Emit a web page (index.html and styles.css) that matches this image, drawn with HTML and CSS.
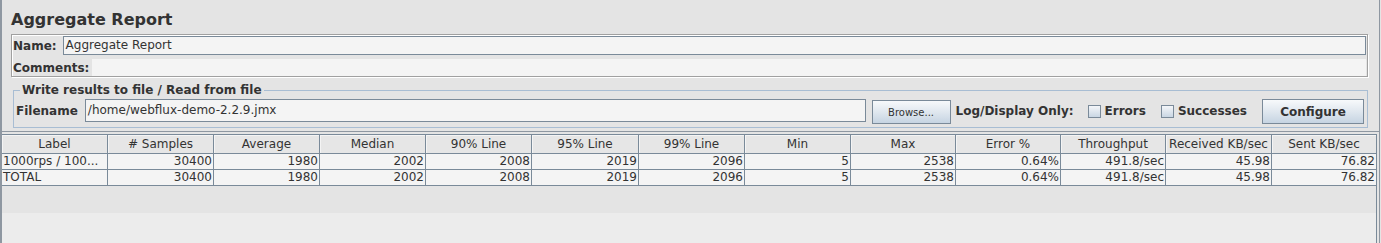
FILE: index.html
```html
<!DOCTYPE html>
<html lang="en">
<head>
    <meta charset="UTF-8">
    <title>Aggregate Report</title>
    <link rel="stylesheet" href="styles.css">
</head>
<body>
<div class="frame">
    <div class="title">Aggregate Report</div>
    <div class="name-box">
        <div class="name-row">
            <span class="lbl name-lbl">Name:</span>
            <div class="field name-field">Aggregate Report</div>
        </div>
        <div class="name-row comments-row">
            <span class="lbl comments-lbl">Comments:</span>
            <div class="comments"></div>
        </div>
    </div>
    <fieldset class="file-box">
        <legend>Write results to file / Read from file</legend>
        <div class="file-row">
            <span class="lbl file-lbl">Filename</span>
            <div class="field file-field">/home/webflux-demo-2.2.9.jmx</div>
            <button class="btn browse">Browse...</button>
            <span class="lbl log-lbl">Log/Display Only:</span>
            <span class="check first"></span><span class="lbl check-lbl">Errors</span>
            <span class="check"></span><span class="lbl check-lbl">Successes</span>
            <button class="btn configure">Configure</button>
        </div>
    </fieldset>
    <div class="results">
        <div class="table-area">
            <div class="grid head">
                <div>Label</div><div># Samples</div><div>Average</div><div>Median</div><div>90% Line</div><div>95% Line</div><div>99% Line</div><div>Min</div><div>Max</div><div>Error %</div><div>Throughput</div><div>Received KB/sec</div><div>Sent KB/sec</div>
            </div>
            <div class="grid body-row">
                <div class="txt">1000rps / 100...</div><div>30400</div><div>1980</div><div>2002</div><div>2008</div><div>2019</div><div>2096</div><div>5</div><div>2538</div><div>0.64%</div><div>491.8/sec</div><div>45.98</div><div>76.82</div>
            </div>
            <div class="grid body-row">
                <div class="txt">TOTAL</div><div>30400</div><div>1980</div><div>2002</div><div>2008</div><div>2019</div><div>2096</div><div>5</div><div>2538</div><div>0.64%</div><div>491.8/sec</div><div>45.98</div><div>76.82</div>
            </div>
            <div class="viewport"></div>
            <div class="bottom"></div>
        </div>
    </div>
</div>
</body>
</html>
```

FILE: styles.css
```css
body {
    margin: 0;
    background: #e4e4e4;
    font-family: "DejaVu Sans", sans-serif;
    font-size: 12px;
    color: #333;
}

.frame {
    width: 1377px;
    height: 243px;
    border-left: 2px solid #8e97a1;
    border-right: 1px solid #8e97a1;
    overflow: hidden;
}

.title {
    font-size: 16px;
    font-weight: bold;
    line-height: 19px;
    height: 19px;
    padding: 10px 0 0 9px;
}

.lbl {
    font-weight: bold;
    white-space: nowrap;
    line-height: 14px;
}

/* name / comments */
.name-box {
    margin: 5px 11px 0 9px;
    padding: 1px 1px 0 1px;
    border: 1px solid #a0a0a0;
    box-shadow: inset 1px 1px #fff, 1px 1px #fff;
}

.name-row {
    display: flex;
    align-items: center;
    height: 19px;
}

.name-lbl {
    margin-right: 6px;
}

.comments-row {
    margin-top: 4px;
    height: 17px;
}

.comments-lbl {
    margin-right: 3px;
}

.comments {
    flex: 1;
    height: 17px;
    background: #f4f4f4;
}

.field {
    flex: 1;
    box-sizing: border-box;
    height: 19px;
    padding: 0 2px;
    line-height: 17px;
    background: #f4f4f4;
    border: 1px solid #7a8a99;
    white-space: nowrap;
}

/* write results group */
.file-box {
    margin: 6px 11px 0 11px;
    padding: 0 3px 2px 2px;
    border: 1px solid #a8bdd3;
    min-width: 0;
}

.file-box legend {
    margin-left: 4px;
    padding: 0 2px;
    font-weight: bold;
    line-height: 14px;
}

.file-row {
    display: flex;
    align-items: flex-start;
    height: 28px;
}

.file-row .lbl {
    align-self: center;
}

.file-lbl {
    margin-right: 7px;
}

.file-field {
    height: 23px;
    line-height: 21px;
    margin-top: 2px;
}

.btn {
    box-sizing: border-box;
    padding: 0;
    border: 1px solid #7a8a99;
    background: linear-gradient(#f7f9fb, #e2e9f0 45%, #c6d4e2);
    color: #333;
    font-family: "DejaVu Sans", sans-serif;
}

.browse {
    width: 79px;
    height: 24px;
    margin: 3px 0 0 6px;
    font-size: 10px;
}

.configure {
    width: 102px;
    height: 25px;
    margin: 2px 0 0 15px;
    font-size: 12px;
    font-weight: bold;
}

.log-lbl {
    margin-left: 5px;
}

.check {
    align-self: center;
    box-sizing: border-box;
    width: 13px;
    height: 13px;
    margin-left: 15px;
    border: 1px solid #7a8a99;
    background: linear-gradient(#f4f6f9, #c9d6e3);
}

.check.first {
    margin-left: 14px;
}

.check-lbl {
    margin-left: 4px;
}

/* results table */
.results {
    margin-top: 3px;
    border-top: 1px solid #8e97a1;
    padding-top: 2px;
}

.table-area {
    width: 1374px;
    border-right: 1px solid #7a8a99;
}

.grid {
    display: grid;
    grid-template-columns: 106px 106px 106px 106px 106px 107px 106px 106px 105px 105px 105px 106px 104px;
}

.grid > div {
    border-right: 1px solid #7a8a99;
    border-bottom: 1px solid #7a8a99;
    white-space: nowrap;
    overflow: hidden;
}

.grid > div:last-child {
    border-right: 0;
}

.head {
    border-top: 1px solid #7a8a99;
}

.head > div {
    height: 18px;
    line-height: 18px;
    text-align: center;
    background: #e6e6e6;
    box-shadow: inset 1px 1px #f4f4f4;
}

.body-row > div {
    height: 15px;
    line-height: 15px;
    padding-right: 1px;
    text-align: right;
    background: #f4f4f4;
}

.body-row > .txt {
    text-align: left;
    padding: 0 0 0 1px;
}

.viewport {
    height: 27px;
}

.bottom {
    height: 40px;
    background: #ececec;
}
```
